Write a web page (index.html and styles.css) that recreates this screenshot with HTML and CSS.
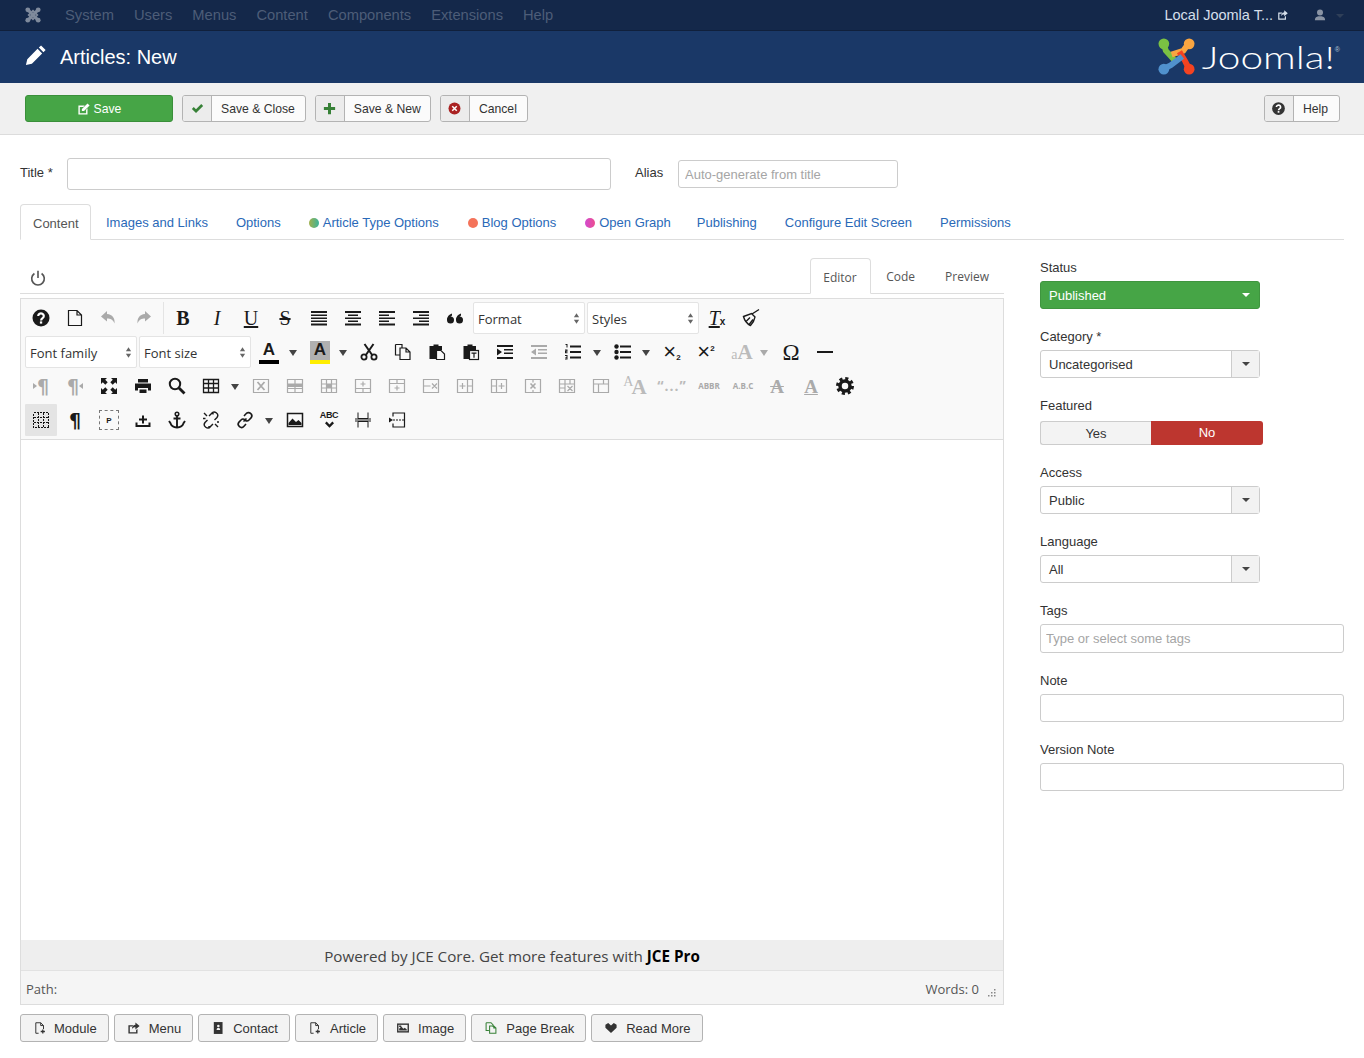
FILE: index.html
```html
<!DOCTYPE html>
<html lang="en">
<head>
  <meta charset="UTF-8" />
  <title>Articles: New</title>
  <link rel="stylesheet" href="styles.css">
</head>
<body>

  <svg class="sprites" xmlns="http://www.w3.org/2000/svg">
    <symbol id="i-help" viewBox="0 0 20 20"><circle cx="10" cy="10" r="8.5" fill="currentColor"/><path d="M7.2 8a2.8 2.6 0 1 1 4.4 2.2c-1 .7-1.5 1.1-1.5 2.2" fill="none" stroke="#fff" stroke-width="2.2"/><rect x="8.9" y="13.4" width="2.3" height="2.2" fill="#fff"/></symbol>
    <symbol id="i-doc" viewBox="0 0 20 20"><path d="M3.5 2.5h8.5l4.5 4.5v10.500h-13zM12 2.500v4.500h4.500" fill="none" stroke="currentColor" stroke-width="1.2"/></symbol>
    <symbol id="i-undo" viewBox="0 0 20 20"><path d="M8 3L2 8.500 8 13.500V10.500c3.500 0 6 1 7.500 5 .5-5.500-2-9-7.500-9.500z" fill="currentColor"/></symbol>
    <symbol id="i-redo" viewBox="0 0 20 20"><path d="M12 3l6 5.500-6 5V10.500c-3.500 0-6 1-7.500 5-.5-5.500 2-9 7.500-9.500z" fill="currentColor"/></symbol>
    <symbol id="i-just" viewBox="0 0 20 20"><path d="M2 3h16v2H2zM2 6.500h16v1.500H2zM2 9.500h16v1.500H2zM2 12.500h16v1.500H2zM2 15.500h16v2H2z" fill="currentColor"/></symbol>
    <symbol id="i-center" viewBox="0 0 20 20"><path d="M2 3h16v2H2zM5 6.500h10v1.500H5zM2 9.500h16v1.500H2zM5 12.500h10v1.500H5zM2 15.500h16v2H2z" fill="currentColor"/></symbol>
    <symbol id="i-left" viewBox="0 0 20 20"><path d="M2 3h16v2H2zM2 6.500h10v1.500H2zM2 9.500h16v1.500H2zM2 12.500h10v1.500H2zM2 15.500h16v2H2z" fill="currentColor"/></symbol>
    <symbol id="i-right" viewBox="0 0 20 20"><path d="M2 3h16v2H2zM8 6.500h10v1.500H8zM2 9.500h16v1.500H2zM8 12.500h10v1.500H8zM2 15.500h16v2H2z" fill="currentColor"/></symbol>
    <symbol id="i-quote" viewBox="0 0 20 20"><circle cx="5.500" cy="12" r="3.500" fill="currentColor"/><path d="M2 12c0-3.500 2-5.500 5-6.500v2c-1.500.7-2 2-2 4z" fill="currentColor"/><circle cx="14.500" cy="12" r="3.500" fill="currentColor"/><path d="M11 12c0-3.500 2-5.500 5-6.500v2c-1.500.7-2 2-2 4z" fill="currentColor"/></symbol>
    <symbol id="i-broom" viewBox="0 0 20 20"><path d="M11 6L18 1.500M2.500 8.500l8-3 3.500 3.500c-.5 3-2 6-4.500 8.500-3-1.500-6-5-7-9zM5.500 13l3.500-3.500M8.500 16l3.500-4.500" fill="none" stroke="currentColor" stroke-width="1.400"/></symbol>
    <symbol id="i-cut" viewBox="0 0 20 20"><path d="M5.500 2l8 11.500M14.500 2l-8 11.500" fill="none" stroke="currentColor" stroke-width="2"/><circle cx="5" cy="15" r="2.600" fill="none" stroke="currentColor" stroke-width="1.800"/><circle cx="15" cy="15" r="2.600" fill="none" stroke="currentColor" stroke-width="1.800"/></symbol>
    <symbol id="i-copy" viewBox="0 0 20 20"><path d="M2.500 2.500h6.500v3M2.500 2.500v10.500h4.500M7 6h6l4 4v7.500H7zM13 6v4h4" fill="none" stroke="currentColor" stroke-width="1.2"/></symbol>
    <symbol id="i-paste" viewBox="0 0 20 20"><path d="M2.500 4h4V2.500h5V4h3.500v4H9v9H2.500z" fill="currentColor"/><path d="M9.500 8.500h4.500l3.500 3.500v5.500h-8z" fill="#f9f9f9" stroke="currentColor" stroke-width="1.2"/></symbol>
    <symbol id="i-pastetext" viewBox="0 0 20 20"><path d="M2.500 4h4V2.500h5V4h3.500v4H9v9H2.500z" fill="currentColor"/><rect x="8.500" y="8.500" width="9" height="9" fill="#f9f9f9" stroke="currentColor" stroke-width="1.2"/><path d="M10.500 10.500h5v1.200h-1.900v4h-1.200v-4h-1.900z" fill="currentColor"/></symbol>
    <symbol id="i-indent" viewBox="0 0 20 20"><path d="M2 3h16v2H2zM9 7h9v1.500H9zM9 10.500h9V12H9zM2 15h16v2H2zM2 6.500L7 10l-5 3.500z" fill="currentColor"/></symbol>
    <symbol id="i-outdent" viewBox="0 0 20 20"><path d="M2 3h16v2H2zM9 7h9v1.500H9zM9 10.500h9V12H9zM2 15h16v2H2zM7 6.500L2 10l5 3.500z" fill="currentColor"/></symbol>
    <symbol id="i-numlist" viewBox="0 0 20 20"><path d="M7 3.500h11v2H7zM7 9h11v2H7zM7 14.500h11v2H7zM2.500 2h2v3.500h-1V3h-1zM2 7.500h2.500v2.200h-1.500v.5h1.500v1H2V8.800h1.500v-.4H2zM2 13h2.500v4.500H2v-1h1.500v-.7H2.400v-.8h1.100V14H2z" fill="currentColor"/></symbol>
    <symbol id="i-bullist" viewBox="0 0 20 20"><path d="M7 3.500h11v2H7zM7 9h11v2H7zM7 14.500h11v2H7z" fill="currentColor"/><circle cx="3.500" cy="4.500" r="2.200" fill="currentColor"/><circle cx="3.500" cy="10" r="2.200" fill="currentColor"/><circle cx="3.500" cy="15.500" r="2.200" fill="currentColor"/></symbol>
    <symbol id="i-full" viewBox="0 0 20 20"><path d="M2 2h6L6.200 3.800l2.500 2.500-2.400 2.400-2.500-2.500L2 8zM18 2v6l-1.800-1.800-2.500 2.500-2.400-2.400 2.500-2.500L12 2zM2 18v-6l1.800 1.800 2.500-2.500 2.400 2.400-2.500 2.500L8 18zM18 18h-6l1.800-1.800-2.500-2.500 2.400-2.400 2.500 2.500L18 12z" fill="currentColor"/></symbol>
    <symbol id="i-print" viewBox="0 0 20 20"><path d="M5 3h10v3.500H5zM2 7.500h16v7h-3V12H5v2.500H2zM6.500 13.500h7v3.500h-7z" fill="currentColor"/></symbol>
    <symbol id="i-search" viewBox="0 0 20 20"><circle cx="8" cy="8" r="5.200" fill="none" stroke="currentColor" stroke-width="2"/><path d="M12 12l5.500 5.500" stroke="currentColor" stroke-width="2.800"/></symbol>
    <symbol id="i-table" viewBox="0 0 20 20"><path d="M2.500 3.500h15v13h-15zM2.500 7.500h15M2.500 12h15M7.500 3.500v13M12.500 3.500v13" fill="none" stroke="currentColor" stroke-width="1.300"/></symbol>
    <symbol id="i-tdel" viewBox="0 0 20 20"><path d="M2.500 3.500h15v13h-15z" fill="none" stroke="currentColor" stroke-width="1.2"/><path d="M6.500 6l7 8M13.500 6l-7 8" stroke="currentColor" stroke-width="1.800"/></symbol>
    <symbol id="i-trow" viewBox="0 0 20 20"><path d="M2.500 3.500h15v13h-15zM2.500 12.500h15M10 3.500v13" fill="none" stroke="currentColor" stroke-width="1.2"/><path d="M2.500 7.500h15v3.500h-15z" fill="currentColor"/></symbol>
    <symbol id="i-tcell" viewBox="0 0 20 20"><path d="M2.500 3.500h15v13h-15zM2.500 8h15M2.500 12h15M7.500 3.500v13M12.500 3.500v13" fill="none" stroke="currentColor" stroke-width="1.2"/><path d="M7.500 8h5v4h-5z" fill="currentColor"/></symbol>
    <symbol id="i-trowb" viewBox="0 0 20 20"><path d="M2.500 3.500h15v13h-15zM2.500 12.500h15M10 12.500v4M10 5.500v5M7.500 8h5" fill="none" stroke="currentColor" stroke-width="1.2"/></symbol>
    <symbol id="i-trowa" viewBox="0 0 20 20"><path d="M2.500 3.500h15v13h-15zM2.500 7.500h15M10 3.500v4M10 9.500v5M7.500 12h5" fill="none" stroke="currentColor" stroke-width="1.2"/></symbol>
    <symbol id="i-trowx" viewBox="0 0 20 20"><path d="M2.500 3.500h15v13h-15zM2.500 10h7M11 7.500l5 5M16 7.500l-5 5" fill="none" stroke="currentColor" stroke-width="1.2"/></symbol>
    <symbol id="i-tcolb" viewBox="0 0 20 20"><path d="M2.500 3.500h15v13h-15zM12.500 3.500v13M12.500 10h5M4.500 10h6M7.500 7v6" fill="none" stroke="currentColor" stroke-width="1.2"/></symbol>
    <symbol id="i-tcola" viewBox="0 0 20 20"><path d="M2.500 3.500h15v13h-15zM7.500 3.500v13M2.500 10h5M9.500 10h6M12.500 7v6" fill="none" stroke="currentColor" stroke-width="1.2"/></symbol>
    <symbol id="i-tcolx" viewBox="0 0 20 20"><path d="M2.500 3.500h15v13h-15zM10 3.500v3M10 14v2.500" fill="none" stroke="currentColor" stroke-width="1.2"/><path d="M7.500 7.500l5 5M12.500 7.500l-5 5" stroke="currentColor" stroke-width="1.600"/></symbol>
    <symbol id="i-tsplit" viewBox="0 0 20 20"><path d="M2.500 3.500h15v13h-15zM2.500 8h15M2.500 12h6M8 3.500v13M13 3.500V8M10.500 10l5 5M15.500 10l-5 5" fill="none" stroke="currentColor" stroke-width="1.2"/></symbol>
    <symbol id="i-tmerge" viewBox="0 0 20 20"><path d="M2.500 3.500h15v13h-15zM2.500 8h15M7.500 8v8.500M12.500 3.500V8" fill="none" stroke="currentColor" stroke-width="1.2"/></symbol>
    <symbol id="i-visual" viewBox="0 0 20 20"><path d="M2.500 2.500h15v15h-15zM2.500 7.500h15M2.500 12.500h15M7.500 2.500v15M12.500 2.500v15" fill="none" stroke="#111" stroke-width="1" stroke-dasharray="2 1" shape-rendering="crispEdges"/></symbol>
    <symbol id="i-upload" viewBox="0 0 20 20"><path d="M2.500 12.500v4.500h15v-4.500h-2v2.500h-11v-2.500z" fill="currentColor"/><path d="M10 5.500v8M6 9.500h8" stroke="currentColor" stroke-width="2"/></symbol>
    <symbol id="i-anchor" viewBox="0 0 20 20"><circle cx="10" cy="4" r="1.800" fill="none" stroke="currentColor" stroke-width="1.500"/><path d="M10 6v11.500M6.500 8.500h7M2 11l1.500 2.200c.8 2.800 3.500 4 6.500 4.300 3-.3 5.700-1.500 6.500-4.300L18 11" fill="none" stroke="currentColor" stroke-width="1.900"/></symbol>
    <symbol id="i-unlink" viewBox="0 0 20 20"><path d="M8 6l2.500-2.500a3 3 0 0 1 5.500 4L13.500 10M12 14l-2.500 2.500a3 3 0 0 1-5.500-4L6.500 10M3 3l3 3M14 14l3 3M12 2v2.500M2 8.500h2.500M8 18v-2M18 12h-2" fill="none" stroke="currentColor" stroke-width="1.400"/></symbol>
    <symbol id="i-link" viewBox="0 0 20 20"><path d="M8.500 11.500l3-3M9 6l2-2.200a2.900 2.900 0 0 1 5 4.100L14 10a2.900 2.900 0 0 1-3.800.300M11 14l-2 2.200a2.900 2.900 0 0 1-5-4.100L6 10a2.900 2.900 0 0 1 3.800-.3" fill="none" stroke="currentColor" stroke-width="1.600"/></symbol>
    <symbol id="i-image" viewBox="0 0 20 20"><path d="M2.500 3.500h15v13h-15z" fill="none" stroke="currentColor" stroke-width="1.500"/><path d="M3.500 15v-2l4-4.500 3.500 3.500 2.500-2 3 3v2z" fill="currentColor"/></symbol>
    <symbol id="i-check" viewBox="3 9 14 10"><path d="M5 12.500l5 5 5-5-1.800-1.700L10 14l-3.200-3.200z" fill="currentColor"/></symbol>
    <symbol id="i-pagebr" viewBox="0 0 20 20"><path d="M5 2.500v6h10v-6M5 17.500v-6h10v6" fill="none" stroke="currentColor" stroke-width="1"/><path d="M2 9h16M2 11h16" fill="none" stroke="currentColor" stroke-width="1"/></symbol>
    <symbol id="i-tmpl" viewBox="0 0 20 20"><path d="M6 6.500V3h11.500v14H6v-3.500" fill="none" stroke="currentColor" stroke-width="1.2"/><path d="M6 10h11.500" fill="none" stroke="currentColor" stroke-width="1.2" stroke-dasharray="2 1"/><path d="M2 7.500L6 10l-4 2.500z" fill="currentColor"/></symbol>
    <symbol id="i-gear" viewBox="0 0 20 20"><circle cx="10" cy="10" r="5" fill="none" stroke="currentColor" stroke-width="3.500"/><circle cx="10" cy="10" r="7.500" fill="none" stroke="currentColor" stroke-width="3" stroke-dasharray="3.100 2.790"/></symbol>
    <symbol id="i-edit" viewBox="0 0 20 20"><path d="M2 5h9L9 7H4v9h9v-5l2-2v9H2z" fill="currentColor"/><path d="M7 10l8-8 3 3-8 8H7z" fill="currentColor"/></symbol>
    <symbol id="i-docplus" viewBox="0 0 20 20"><path d="M8 17.500H4v-15h7l4 4v5M11 2.500v4h4" fill="none" stroke="currentColor" stroke-width="1.400"/><path d="M14 12v6M11 15h6" stroke="currentColor" stroke-width="1.800"/></symbol>
    <symbol id="i-share" viewBox="0 0 20 20"><path d="M2 6h7L7.500 8H4v8h9v-3l2-1.500V18H2z" fill="currentColor"/><path d="M12 2l6 5-6 5V9c-2.500 0-4 .5-5 3 0-4 2-6 5-6.500z" fill="currentColor"/></symbol>
    <symbol id="i-book" viewBox="0 0 20 20"><path d="M4 1.500h12.500v17H4z" fill="currentColor"/><circle cx="10.500" cy="7" r="1.800" fill="#f3f3f3"/><path d="M8 13c0-2.500 1-3.500 2.500-3.500S13 10.500 13 13z" fill="#f3f3f3"/></symbol>
    <symbol id="i-pic" viewBox="0 0 20 20"><path d="M1.500 3.500h17v13h-17z" fill="currentColor"/><path d="M3.500 5.500h13v9h-13z" fill="#f3f3f3"/><path d="M4.500 13.500V11l3-3 3 3 2-1.500 3 2.500v1.500zM4.500 6.500h3v2h-3z" fill="currentColor"/></symbol>
    <symbol id="i-copy2" viewBox="0 0 20 20"><path d="M3 2.500h7l3 3v3M3 2.500v11h4M8 7h6l3 3v7.500H8zM14 7v3h3" fill="none" stroke="currentColor" stroke-width="1.500"/></symbol>
    <symbol id="i-heart" viewBox="0 0 20 20"><path d="M2 5.500L6 3l4 3.500L14 3l4 2.500v4L10 17 2 9.500z" fill="currentColor"/></symbol>
    <symbol id="i-spin" viewBox="0 0 8 12"><path d="M4 0l3 4.500H1zM4 12L1 7.500h6z" fill="currentColor"/></symbol>
  </svg>

  <nav class="navbar">
    <div class="nav-left">
      <svg class="nav-logo" viewBox="0 0 20 20"><path d="M4 4l12 12M16 4L4 16" stroke="currentColor" stroke-width="4"/><path d="M10 4.500l5.500 5.500-5.500 5.500L4.500 10z" fill="none" stroke="currentColor" stroke-width="2"/><circle cx="3.500" cy="3.500" r="3" fill="currentColor"/><circle cx="16.500" cy="3.500" r="3" fill="currentColor"/><circle cx="3.500" cy="16.500" r="3" fill="currentColor"/><circle cx="16.500" cy="16.500" r="3" fill="currentColor"/></svg>
      <a>System</a>
      <a>Users</a>
      <a>Menus</a>
      <a>Content</a>
      <a>Components</a>
      <a>Extensions</a>
      <a>Help</a>
    </div>
    <div class="nav-right">
      <span class="site-name">Local Joomla T...</span>
      <svg class="site-ico"><use href="#i-share"/></svg>
      <svg class="user-ico" viewBox="0 0 14 14"><circle cx="7" cy="4" r="3.500" fill="currentColor"/><path d="M1 13c0-3 2-4 4-4.500h4c2 .5 4 1.500 4 4.500z" fill="currentColor"/></svg>
      <span class="user-caret"></span>
    </div>
  </nav>

  <header class="header">
    <h1>
      <svg class="title-ico" viewBox="0 0 24 24"><path d="M17.500 1.500l5 5-2.400 2.400-5-5zM13.700 5.300l5 5L7.500 21.500 1 23l1.500-6.500z" fill="#fff"/></svg>
      Articles: New
    </h1>
    <div class="brand">
      <svg class="brand-ico" viewBox="0 0 38 38">
        <g fill="none" stroke-width="6">
          <path d="M6 6l2 7 10 11" stroke="#7ac143"/>
          <path d="M31 6l-5 7-12 4" stroke="#f9a541"/>
          <path d="M32 32l-4-8-6-10" stroke="#f44321"/>
          <path d="M7 31l6-3 12-9" stroke="#5091cd"/>
        </g>
        <circle cx="6" cy="6" r="5.500" fill="#7ac143"/>
        <circle cx="32" cy="6" r="5.500" fill="#f9a541"/>
        <circle cx="32" cy="32" r="5.500" fill="#f44321"/>
        <circle cx="6" cy="32" r="5.500" fill="#5091cd"/>
      </svg>
      <span class="brand-name">Joomla!</span><sup class="brand-reg">®</sup>
    </div>
  </header>

  <div class="subhead">
    <div class="actions">
      <a class="btn btn-save"><svg class="save-ico"><use href="#i-edit"/></svg>Save</a>
      <a class="btn btn-split"><span class="btn-ico"><svg class="c-green" viewBox="0 0 20 20"><path d="M2.500 10.500L5 8l3 3 7-7 2.500 2.500L8 16z" fill="currentColor"/></svg></span><span class="btn-label">Save &amp; Close</span></a>
      <a class="btn btn-split"><span class="btn-ico"><svg class="c-green" viewBox="0 0 20 20"><path d="M8 2.500h4V8h5.500v4H12v5.500H8V12H2.500V8H8z" fill="currentColor"/></svg></span><span class="btn-label">Save &amp; New</span></a>
      <a class="btn btn-split"><span class="btn-ico"><svg viewBox="0 0 20 20"><circle cx="10" cy="10" r="8" fill="#aa2222"/><path d="M7 7l6 6M13 7l-6 6" stroke="#fff" stroke-width="2"/></svg></span><span class="btn-label">Cancel</span></a>
    </div>
    <a class="btn btn-split btn-help"><span class="btn-ico"><svg class="c-dark"><use href="#i-help"/></svg></span><span class="btn-label">Help</span></a>
  </div>

  <main class="page">
    <div class="title-row">
      <label class="title-label">Title *</label>
      <input class="input title-input" type="text">
      <label class="alias-label">Alias</label>
      <input class="input alias-input" type="text" placeholder="Auto-generate from title">
    </div>

    <ul class="tabs">
      <li class="active"><a>Content</a></li>
      <li><a>Images and Links</a></li>
      <li><a>Options</a></li>
      <li><a><span class="dot dot-green"></span>Article Type Options</a></li>
      <li><a><span class="dot dot-orange"></span>Blog Options</a></li>
      <li><a><span class="dot dot-pink"></span>Open Graph</a></li>
      <li><a>Publishing</a></li>
      <li><a>Configure Edit Screen</a></li>
      <li><a>Permissions</a></li>
    </ul>

    <div class="columns">
      <section class="editor-col">
        <div class="editor-top">
          <svg class="power" viewBox="0 0 20 20"><path d="M6 5a7 7 0 1 0 8 0M10 2v8" fill="none" stroke="currentColor" stroke-width="1.800"/></svg>
          <div class="editor-tabs">
            <span class="active">Editor</span>
            <span class="code">Code</span>
            <span>Preview</span>
          </div>
        </div>

        <div class="editor">
          <div class="toolbar">
            <div class="tb-row">
              <span class="tb"><svg><use href="#i-help"/></svg></span>
              <span class="tb"><svg><use href="#i-doc"/></svg></span>
              <span class="tb off"><svg><use href="#i-undo"/></svg></span>
              <span class="tb off"><svg><use href="#i-redo"/></svg></span>
              <span class="tb-sep"></span>
              <span class="tb tx tx-b">B</span>
              <span class="tb tx tx-i">I</span>
              <span class="tb tx tx-u">U</span>
              <span class="tb tx tx-s">S</span>
              <span class="tb"><svg><use href="#i-just"/></svg></span>
              <span class="tb"><svg><use href="#i-center"/></svg></span>
              <span class="tb"><svg><use href="#i-left"/></svg></span>
              <span class="tb"><svg><use href="#i-right"/></svg></span>
              <span class="tb"><svg><use href="#i-quote"/></svg></span>
              <span class="tb-select first">Format<svg><use href="#i-spin"/></svg></span>
              <span class="tb-select">Styles<svg><use href="#i-spin"/></svg></span>
              <span class="tb tx tx-clear after-select"><span><u>T</u><small>x</small></span></span>
              <span class="tb"><svg><use href="#i-broom"/></svg></span>
            </div>

            <div class="tb-row">
              <span class="tb-select first">Font family<svg><use href="#i-spin"/></svg></span>
              <span class="tb-select">Font size<svg><use href="#i-spin"/></svg></span>
              <span class="tb tx tx-color after-select"><b class="swatch-black">A</b></span>
              <span class="tb-arrow wide"></span>
              <span class="tb tx tx-color"><b class="swatch-yellow">A</b></span>
              <span class="tb-arrow narrow"></span>
              <span class="tb"><svg><use href="#i-cut"/></svg></span>
              <span class="tb"><svg><use href="#i-copy"/></svg></span>
              <span class="tb"><svg><use href="#i-paste"/></svg></span>
              <span class="tb"><svg><use href="#i-pastetext"/></svg></span>
              <span class="tb"><svg><use href="#i-indent"/></svg></span>
              <span class="tb off"><svg><use href="#i-outdent"/></svg></span>
              <span class="tb"><svg><use href="#i-numlist"/></svg></span>
              <span class="tb-arrow"></span>
              <span class="tb"><svg><use href="#i-bullist"/></svg></span>
              <span class="tb-arrow narrow"></span>
              <span class="tb tx tx-script"><span>×<sub>2</sub></span></span>
              <span class="tb tx tx-script"><span>×<sup>2</sup></span></span>
              <span class="tb tx tx-case off"><span><small>a</small>A</span></span>
              <span class="tb-arrow wide off"></span>
              <span class="tb tx tx-omega">Ω</span>
              <span class="tb tx-hr"><i></i></span>
            </div>

            <div class="tb-row">
              <span class="tb tx tx-para off"><i class="tri-r"></i>¶</span>
              <span class="tb tx tx-para off">¶<i class="tri-l"></i></span>
              <span class="tb"><svg><use href="#i-full"/></svg></span>
              <span class="tb"><svg><use href="#i-print"/></svg></span>
              <span class="tb"><svg><use href="#i-search"/></svg></span>
              <span class="tb"><svg><use href="#i-table"/></svg></span>
              <span class="tb-arrow"></span>
              <span class="tb off"><svg><use href="#i-tdel"/></svg></span>
              <span class="tb off"><svg><use href="#i-trow"/></svg></span>
              <span class="tb off"><svg><use href="#i-tcell"/></svg></span>
              <span class="tb off"><svg><use href="#i-trowb"/></svg></span>
              <span class="tb off"><svg><use href="#i-trowa"/></svg></span>
              <span class="tb off"><svg><use href="#i-trowx"/></svg></span>
              <span class="tb off"><svg><use href="#i-tcolb"/></svg></span>
              <span class="tb off"><svg><use href="#i-tcola"/></svg></span>
              <span class="tb off"><svg><use href="#i-tcolx"/></svg></span>
              <span class="tb off"><svg><use href="#i-tsplit"/></svg></span>
              <span class="tb off"><svg><use href="#i-tmerge"/></svg></span>
              <span class="tb tx tx-style off"><span><small>A</small>A</span></span>
              <span class="tb tx tx-cite off">“...”</span>
              <span class="tb tx tx-abbr off">ABBR</span>
              <span class="tb tx tx-abbr off">A.B.C</span>
              <span class="tb tx tx-del off">A</span>
              <span class="tb tx tx-ins off">A</span>
              <span class="tb"><svg><use href="#i-gear"/></svg></span>
            </div>

            <div class="tb-row">
              <span class="tb tb-active"><svg><use href="#i-visual"/></svg></span>
              <span class="tb tx tx-para">¶</span>
              <span class="tb tx-pbox"><b>P</b></span>
              <span class="tb"><svg><use href="#i-upload"/></svg></span>
              <span class="tb"><svg><use href="#i-anchor"/></svg></span>
              <span class="tb"><svg><use href="#i-unlink"/></svg></span>
              <span class="tb"><svg><use href="#i-link"/></svg></span>
              <span class="tb-arrow"></span>
              <span class="tb"><svg><use href="#i-image"/></svg></span>
              <span class="tb tx-spell"><b>ABC</b><svg><use href="#i-check"/></svg></span>
              <span class="tb"><svg><use href="#i-pagebr"/></svg></span>
              <span class="tb"><svg><use href="#i-tmpl"/></svg></span>
            </div>
          </div>

          <div class="edit-area"></div>
          <div class="powered">Powered by JCE Core. Get more features with <strong>JCE Pro</strong></div>
          <div class="statusbar">
            <span>Path:</span>
            <span class="words">Words: 0
              <svg class="grip" viewBox="0 0 10 10"><path d="M8 1h1.500v1.500H8zM5 4h1.500v1.500H5zM8 4h1.500v1.500H8zM2 7h1.500v1.500H2zM5 7h1.500v1.500H5zM8 7h1.500v1.500H8z" fill="#888"/></svg>
            </span>
          </div>
        </div>

        <div class="editor-xtd">
          <a class="xtd"><svg><use href="#i-docplus"/></svg>Module</a>
          <a class="xtd"><svg><use href="#i-share"/></svg>Menu</a>
          <a class="xtd"><svg><use href="#i-book"/></svg>Contact</a>
          <a class="xtd"><svg><use href="#i-docplus"/></svg>Article</a>
          <a class="xtd"><svg><use href="#i-pic"/></svg>Image</a>
          <a class="xtd"><svg class="c-green"><use href="#i-copy2"/></svg>Page Break</a>
          <a class="xtd"><svg><use href="#i-heart"/></svg>Read More</a>
        </div>
      </section>

      <aside class="sidebar">
        <div class="field">
          <label>Status</label>
          <div class="chosen chosen-green"><span>Published</span><i class="caret"></i></div>
        </div>
        <div class="field">
          <label>Category *</label>
          <div class="chosen"><span>Uncategorised</span><b class="chosen-arrow"><i class="caret"></i></b></div>
        </div>
        <div class="field">
          <label class="toggle-label">Featured</label>
          <div class="toggle"><span>Yes</span><span class="on">No</span></div>
        </div>
        <div class="field">
          <label>Access</label>
          <div class="chosen"><span>Public</span><b class="chosen-arrow"><i class="caret"></i></b></div>
        </div>
        <div class="field">
          <label>Language</label>
          <div class="chosen"><span>All</span><b class="chosen-arrow"><i class="caret"></i></b></div>
        </div>
        <div class="field">
          <label>Tags</label>
          <input class="input side-input tags" type="text" placeholder="Type or select some tags">
        </div>
        <div class="field">
          <label>Note</label>
          <input class="input side-input" type="text">
        </div>
        <div class="field">
          <label>Version Note</label>
          <input class="input side-input" type="text">
        </div>
      </aside>
    </div>
  </main>

</body>
</html>
```

FILE: styles.css
```css
* {
  box-sizing: border-box;
}

body {
  margin: 0;
  font-family: "Liberation Sans", Arial, sans-serif;
  font-size: 13px;
  color: #333;
  background: #fff;
  overflow: hidden;
}

.sprites {
  display: none;
}

svg {
  display: block;
}

/* top bars */
.navbar {
  height: 31px;
  background: #14284a;
  border-bottom: 1px solid #10203c;
  display: flex;
  justify-content: space-between;
  align-items: center;
  padding: 0 20px 1px 25px;
  font-size: 14.7px;
}

.nav-left {
  display: flex;
  align-items: center;
  gap: 20px;
  color: #4d5d78;
}

.nav-logo {
  width: 16px;
  height: 16px;
  margin-right: 4px;
  color: #7f8a9c;
}

.nav-right {
  display: flex;
  align-items: center;
  font-size: 14.5px;
  color: #d5dfea;
}

.site-ico {
  width: 12px;
  height: 12px;
  margin-left: 4px;
}

.user-ico {
  width: 12px;
  height: 12px;
  margin-left: 25px;
  color: #8a94a4;
}

.user-caret {
  margin-left: 10px;
  margin-top: 2px;
  border: 4px solid transparent;
  border-top-color: #2f3f58;
  border-bottom: 0;
}

.header {
  height: 52px;
  background: #1a3867;
  display: flex;
  justify-content: space-between;
  align-items: center;
  padding: 0 25px;
  color: #fff;
}

.header h1 {
  margin: 0;
  display: flex;
  align-items: center;
  gap: 13px;
  font-size: 20px;
  font-weight: 400;
}

.title-ico {
  width: 22px;
  height: 22px;
  margin-top: -4px;
}

.brand {
  display: flex;
  align-items: center;
  margin-right: -1px;
  margin-top: -1px;
}

.brand-ico {
  width: 37px;
  height: 37px;
}

.brand-name {
  margin-left: 35px;
  font-family: Lato, sans-serif;
  font-weight: 300;
  font-size: 32px;
  line-height: 37px;
  transform: scaleX(1.27);
  transform-origin: right center;
}

.brand-reg {
  font-size: 7px;
  color: #b9c4d4;
  margin: -14px 0 0 0;
}

.subhead {
  height: 52px;
  background: #f0f0f0;
  border-bottom: 1px solid #dcdcdc;
  display: flex;
  justify-content: space-between;
  align-items: center;
  padding: 0 24px 0 25px;
}

.actions {
  display: flex;
  gap: 9px;
}

.btn {
  height: 27px;
  display: flex;
  align-items: center;
  border: 1px solid #b3b3b3;
  border-radius: 3px;
  background: #fbfbfb;
  font-size: 12.2px;
  color: #333;
}

.btn-save {
  width: 148px;
  justify-content: center;
  background: #46a546;
  border-color: #3a8f3a;
  color: #fff;
}

.save-ico {
  width: 14px;
  height: 14px;
  margin-right: 3px;
}

.btn-ico {
  width: 29px;
  height: 100%;
  display: flex;
  align-items: center;
  justify-content: center;
  background: #ececec;
  border-right: 1px solid #b3b3b3;
  border-radius: 2px 0 0 2px;
}

.btn-ico svg {
  width: 15px;
  height: 15px;
}

.btn-label {
  padding: 0 10px 0 9px;
}

.actions .btn:nth-child(3) .btn-label {
  padding-right: 9px;
}

.btn-help .btn-label {
  padding-right: 11px;
}

.c-green {
  color: #378137;
}

.c-dark {
  color: #333;
}

/* title and tabs */
.page {
  padding: 23px 20px 0;
}

.title-row {
  display: flex;
  align-items: center;
  height: 32px;
}

.title-label {
  width: 47px;
  margin-top: -4px;
}

.alias-label {
  margin: -4px 14px 0 24px;
  width: 29px;
}

.input {
  border: 1px solid #ccc;
  border-radius: 3px;
  background: #fff;
  font-family: "Liberation Sans", Arial, sans-serif;
  font-size: 13px;
  padding: 0 6px;
  color: #333;
}

.input::placeholder {
  color: #a5a5a5;
}

.title-input {
  width: 544px;
  height: 32px;
}

.alias-input {
  width: 220px;
  height: 28px;
}

.tabs {
  list-style: none;
  margin: 14px 0 0;
  padding: 0;
  height: 36px;
  display: flex;
  border-bottom: 1px solid #ddd;
  font-size: 13px;
  color: #2a69b8;
}

.tabs li {
  padding: 11px 14px 0;
}

.tabs li:nth-child(4),
.tabs li:nth-child(5) {
  padding-right: 15px;
}

.tabs li:nth-child(6) {
  padding-right: 12px;
}

.tabs li.active {
  width: 71px;
  height: 36px;
  padding-left: 12px;
  margin-right: 1px;
  background: #fff;
  border: 1px solid #ddd;
  border-bottom-color: #fff;
  border-radius: 4px 4px 0 0;
  color: #555;
}

.dot {
  display: inline-block;
  width: 10px;
  height: 10px;
  margin-right: 4px;
  border-radius: 50%;
  vertical-align: -1px;
}

.dot-green {
  background: linear-gradient(90deg, #a0b04c, #3cb39a);
}

.dot-orange {
  background: #f4735a;
}

.dot-pink {
  background: linear-gradient(90deg, #d24bd0, #ec4d8f);
}

/* editor column */
.columns {
  display: flex;
  justify-content: space-between;
}

.editor-col {
  width: 984px;
}

.editor-top {
  height: 54px;
  margin-top: 0;
  padding-top: 18px;
  display: flex;
  justify-content: space-between;
  border-bottom: 1px solid #ddd;
}

.power {
  width: 18px;
  height: 18px;
  margin: 11px 0 0 9px;
  color: #555;
}

.editor-tabs {
  display: flex;
  margin-right: 2px;
  font-family: "Open Sans", sans-serif;
  font-size: 12px;
  color: #555;
}

.editor-tabs span {
  padding: 10px 13px 0 14px;
}

.editor-tabs span.code {
  padding-right: 16px;
}

.editor-tabs span.active {
  width: 61px;
  height: 36px;
  padding-left: 12px;
  margin-right: 1px;
  background: #fff;
  border: 1px solid #ddd;
  border-bottom-color: #fff;
  border-radius: 4px 4px 0 0;
}

.editor {
  margin-top: 4px;
  border: 1px solid #ddd;
  font-family: "Open Sans", sans-serif;
}

.toolbar {
  background: #f9f9f9;
  border-bottom: 1px solid #ddd;
  padding: 2px 0 2px 3px;
  height: 141px;
}

.tb-row {
  display: flex;
  align-items: center;
  height: 34px;
  color: #1a1a1a;
}

.tb {
  width: 34px;
  height: 34px;
  flex: none;
  display: flex;
  align-items: center;
  justify-content: center;
}

.tb svg {
  width: 20px;
  height: 20px;
}

.tb.off,
.tb-arrow.off {
  color: #aaa;
}

.tb-active {
  width: 32px;
  height: 32px;
  margin: 0 1px;
  background: #e4e4e4;
  border-radius: 1px;
}

.tb-sep {
  width: 1px;
  height: 32px;
  margin: 0 2px 0 3px;
  background: #e4e4e4;
}

.tb-arrow {
  width: 16px;
  height: 34px;
  flex: none;
  display: flex;
  align-items: center;
  padding-left: 3px;
}

.tb-arrow.wide {
  width: 17px;
}

.tb-arrow.narrow {
  width: 15px;
  padding-left: 2px;
}

.tb-arrow::after {
  content: "";
  margin-top: 2px;
  border: 4px solid transparent;
  border-top: 6px solid currentColor;
  border-bottom: 0;
  color: #444;
}

.tb-arrow.off::after {
  color: #aaa;
}

.tb-select {
  width: 112px;
  height: 32px;
  flex: none;
  display: flex;
  justify-content: space-between;
  align-items: center;
  margin-left: 2px;
  padding: 1px 4px 0;
  background: #fff;
  border: 1px solid #e4e4e4;
  border-radius: 2px;
  font-size: 13px;
  color: #333;
}

.tb-select.first {
  margin-left: 1px;
}

.tb-select svg {
  width: 7px;
  height: 11px;
  margin-top: -1px;
  color: #666;
}

.after-select {
  margin-left: 1px;
}

.tx {
  font-family: "Liberation Serif", serif;
  font-size: 20px;
  line-height: 1;
}

.tx-b {
  font-weight: 700;
}

.tx-i {
  font-style: italic;
}

.tx-u {
  text-decoration: underline;
}

.tx-s {
  text-decoration: line-through;
}

.tx-clear {
  font-style: italic;
}

.tx-clear small {
  font-family: "Liberation Sans", sans-serif;
  font-style: normal;
  font-weight: 700;
  font-size: 10px;
}

.tx-color b {
  display: block;
  width: 20px;
  height: 23px;
  font-family: "Liberation Sans", sans-serif;
  font-size: 17px;
  line-height: 18px;
  text-align: center;
}

.swatch-black {
  border-bottom: 4px solid #000;
}

.swatch-yellow {
  background: #b0b0b0;
  border-bottom: 4px solid #ffee00;
}

.tx-script {
  font-family: "Liberation Sans", sans-serif;
  font-size: 22px;
}

.tx-script sub,
.tx-script sup {
  font-size: 8px;
  font-weight: 700;
  line-height: 0;
}

.tx-script sub {
  vertical-align: -1px;
}

.tx-case,
.tx-style {
  font-weight: 700;
  font-size: 21px;
}

.tb.tx-case {
  padding-left: 4px;
  color: #bbb;
}

.tb.tx-style {
  color: #bbb;
}

.tx-case small,
.tx-style small {
  font-size: 14px;
  font-weight: 400;
}

.tx-style small {
  vertical-align: 8px;
  margin-right: -2px;
}

.tx-omega {
  font-size: 23px;
}

.tx-hr i {
  display: block;
  width: 16px;
  height: 2px;
  background: #1a1a1a;
}

.tx-para {
  font-family: "DejaVu Sans", sans-serif;
  font-size: 19px;
  font-weight: 700;
}

.tri-r,
.tri-l {
  border: 3px solid transparent;
}

.tri-r {
  border-left: 4px solid #aaa;
  border-right: 0;
}

.tri-l {
  border-right: 4px solid #aaa;
  border-left: 0;
}

.tb.tx-cite {
  width: 40px;
  font-size: 14px;
  letter-spacing: 1px;
  font-family: "Open Sans", sans-serif;
  font-weight: 700;
  color: #bbb;
}

.tx-abbr {
  font-family: "Open Sans", sans-serif;
  font-size: 8px;
  font-weight: 700;
}

.tx-del,
.tx-ins {
  font-size: 19px;
  font-weight: 700;
}

.tx-del {
  text-decoration: line-through;
}

.tx-ins {
  text-decoration: underline;
}

.tx-pbox b {
  display: flex;
  align-items: center;
  justify-content: center;
  width: 20px;
  height: 20px;
  border: 1px dashed #777;
  font-size: 8px;
  font-family: "Liberation Sans", sans-serif;
}

.tx-spell {
  flex-direction: column;
  line-height: 1;
}

.tx-spell b {
  font-size: 9px;
  line-height: 8px;
  letter-spacing: -0.3px;
  font-family: "Liberation Sans", sans-serif;
  margin-bottom: 1px;
}

.tb.tx-spell svg {
  width: 13px;
  height: 9px;
}

.edit-area {
  height: 500px;
  background: #fff;
}

.powered {
  height: 31px;
  background: #eee;
  border-bottom: 1px solid #e2e2e2;
  text-align: center;
  font-size: 15.2px;
  line-height: 32px;
  color: #444;
}

.powered strong {
  color: #000;
}

.statusbar {
  height: 33px;
  background: #f5f5f5;
  display: flex;
  justify-content: space-between;
  align-items: center;
  padding: 3px 7px 0 5px;
  font-size: 13px;
  color: #555;
}

.words {
  display: flex;
  align-items: center;
  gap: 7px;
}

.grip {
  width: 10px;
  height: 10px;
  margin-top: 8px;
}

.editor-xtd {
  display: flex;
  gap: 5px;
  margin-top: 9px;
}

.xtd {
  height: 28px;
  display: flex;
  align-items: center;
  gap: 8px;
  padding: 0 11px 0 12px;
  background: #f3f3f3;
  border: 1px solid #b3b3b3;
  border-radius: 3px;
  font-size: 13px;
  color: #333;
}

.xtd:first-child {
  gap: 7px;
}

.xtd svg {
  width: 14px;
  height: 14px;
}

/* right column */
.sidebar {
  width: 304px;
  padding-top: 18px;
}

.field {
  margin-bottom: 18px;
}

.field label {
  display: block;
  height: 18px;
  line-height: 20px;
  margin-bottom: 5px;
  font-size: 13px;
}

.field label.toggle-label {
  margin-bottom: 7px;
}

.chosen {
  width: 220px;
  height: 28px;
  display: flex;
  justify-content: space-between;
  align-items: center;
  padding-left: 8px;
  background: #fff;
  border: 1px solid #ccc;
  border-radius: 3px;
  font-size: 13px;
}

.chosen-green {
  padding-right: 9px;
  background: #46a546;
  border-color: #3f953f;
  color: #fff;
}

.chosen-arrow {
  width: 28px;
  height: 100%;
  display: flex;
  align-items: center;
  justify-content: center;
  background: #f2f2f2;
  border-left: 1px solid #ccc;
}

.caret {
  border: 4px solid transparent;
  border-top-color: currentColor;
  border-bottom: 0;
  color: #444;
}

.chosen-green .caret {
  color: #fff;
}

.toggle {
  width: 223px;
  height: 24px;
  display: flex;
  text-align: center;
  line-height: 23px;
  font-size: 13px;
}

.toggle span {
  width: 111px;
  background: #f3f3f3;
  border: 1px solid #ccc;
  border-right: 0;
  border-radius: 3px 0 0 3px;
}

.toggle span.on {
  width: 112px;
  background: #bd362f;
  border: 0;
  border-radius: 0 3px 3px 0;
  color: #fff;
}

.side-input {
  display: block;
  width: 304px;
  height: 28px;
}

.tags {
  height: 29px;
  padding: 0 5px;
}
```
